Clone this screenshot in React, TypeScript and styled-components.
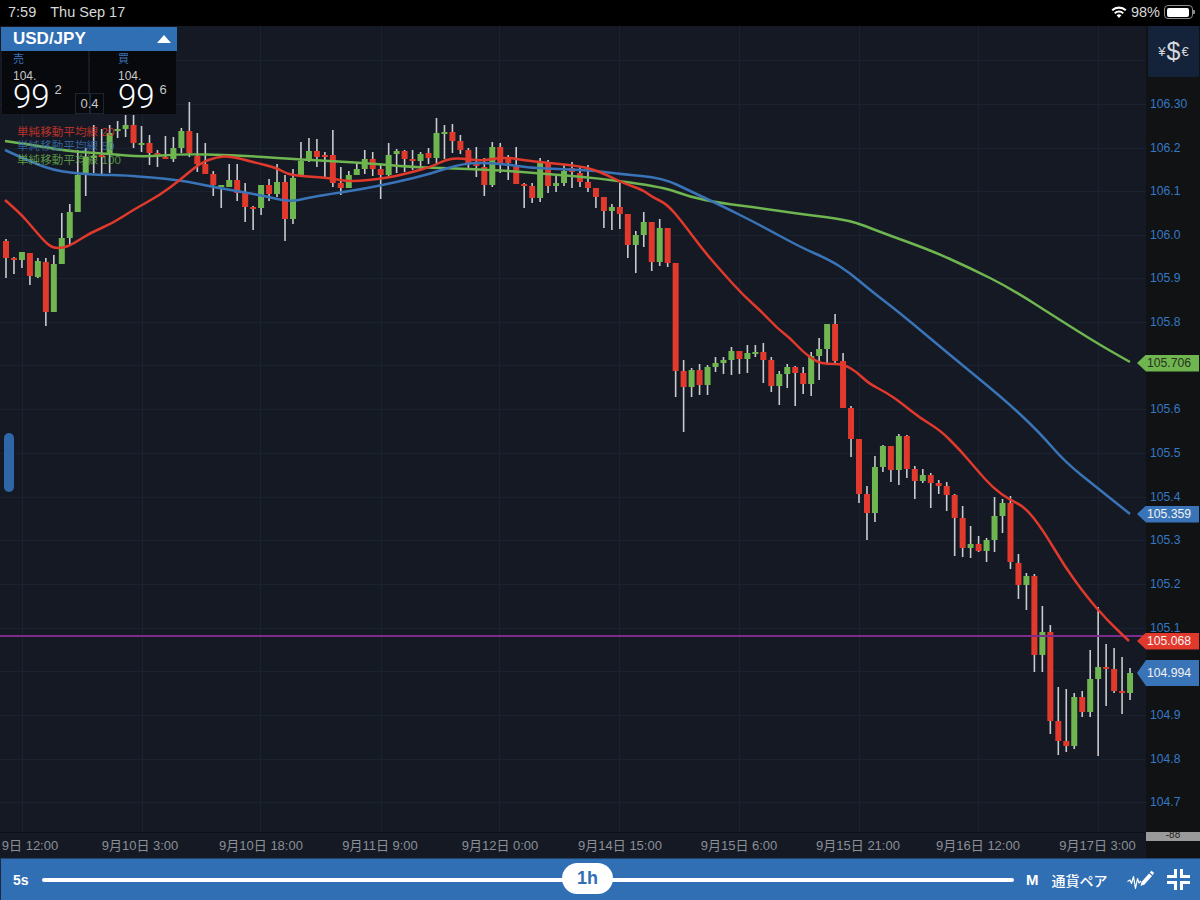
import React from 'react';
import styled, { createGlobalStyle } from 'styled-components';

const RED = '#e2392d';
const GREEN = '#6fb550';
const BLUE = '#3a74b8';
const BAR = '#316fb4';
const AXIS_W = 54;

// [up?, wickTop, bodyTop, bodyBottom, wickBottom]
type Candle = [0 | 1, number, number, number, number];

const candles: Candle[] = [
  [0, 239, 241, 258, 278], [0, 257, 258, 260, 274], [1, 252, 252, 260, 268], [0, 253, 253, 276, 285],
  [1, 258, 261, 277, 278], [0, 258, 262, 312, 326], [1, 255, 264, 312, 312], [1, 213, 238, 264, 264],
  [1, 204, 212, 238, 246], [1, 150, 175, 212, 212], [1, 148, 157, 173, 196], [1, 125, 156, 158, 173],
  [0, 129, 155, 157, 174], [1, 125, 133, 154, 173], [1, 121, 129, 131, 138], [1, 115, 125, 129, 137],
  [0, 115, 125, 143, 148], [1, 126, 143, 144, 152], [0, 135, 143, 153, 165], [0, 150, 153, 155, 167],
  [0, 136, 157, 159, 159], [1, 137, 148, 159, 162], [1, 128, 131, 148, 153], [0, 102, 131, 153, 157],
  [0, 133, 156, 164, 172], [0, 143, 164, 174, 174], [0, 171, 174, 185, 196], [1, 185, 185, 187, 208],
  [1, 164, 180, 187, 187], [0, 164, 180, 193, 201], [0, 183, 193, 207, 222], [0, 206, 207, 209, 230],
  [1, 185, 185, 208, 215], [0, 179, 185, 194, 201], [1, 164, 182, 194, 197], [0, 175, 182, 219, 241],
  [1, 169, 178, 219, 224], [1, 142, 161, 175, 175], [1, 138, 151, 160, 162], [0, 139, 151, 157, 167],
  [0, 152, 155, 157, 177], [0, 130, 155, 183, 187], [0, 167, 183, 188, 195], [1, 171, 175, 188, 188],
  [1, 163, 169, 175, 175], [1, 150, 159, 169, 174], [0, 152, 159, 169, 176], [0, 165, 169, 175, 199],
  [1, 143, 155, 175, 177], [1, 149, 151, 154, 173], [0, 150, 151, 159, 172], [0, 150, 159, 161, 170],
  [1, 152, 154, 161, 170], [0, 148, 153, 158, 164], [1, 118, 133, 158, 164], [1, 125, 132, 134, 159],
  [0, 124, 132, 141, 153], [0, 135, 141, 150, 154], [0, 148, 150, 163, 168], [0, 147, 164, 166, 177],
  [0, 158, 167, 185, 196], [1, 142, 147, 185, 187], [0, 143, 147, 163, 173], [0, 155, 157, 163, 180],
  [0, 147, 167, 184, 184], [0, 183, 184, 186, 208], [0, 183, 186, 198, 203], [1, 158, 162, 198, 202],
  [0, 160, 162, 186, 193], [1, 175, 183, 186, 192], [1, 165, 171, 183, 186], [0, 162, 168, 172, 188],
  [0, 167, 173, 182, 187], [0, 165, 182, 188, 192], [0, 188, 188, 197, 208], [0, 197, 197, 211, 228],
  [1, 204, 207, 211, 230], [0, 183, 207, 214, 229], [0, 214, 214, 245, 258], [1, 231, 235, 245, 273],
  [1, 212, 222, 235, 247], [0, 222, 222, 262, 271], [1, 219, 228, 262, 266], [0, 228, 228, 263, 267],
  [0, 263, 263, 371, 397], [0, 360, 371, 387, 432], [1, 368, 370, 387, 397], [0, 364, 370, 385, 395],
  [1, 365, 367, 385, 395], [1, 357, 363, 367, 372], [1, 357, 360, 363, 374], [1, 347, 351, 360, 375],
  [0, 351, 351, 359, 374], [1, 345, 353, 359, 373], [1, 345, 352, 354, 357], [0, 343, 352, 360, 383],
  [0, 357, 360, 386, 392], [1, 371, 374, 386, 405], [1, 364, 367, 374, 388], [0, 366, 367, 373, 406],
  [0, 367, 373, 384, 394], [1, 352, 356, 384, 396], [1, 338, 349, 356, 380], [1, 324, 324, 349, 363],
  [0, 314, 324, 361, 363], [0, 353, 361, 408, 408], [0, 406, 408, 439, 457], [0, 439, 439, 494, 503],
  [0, 486, 494, 513, 540], [1, 456, 467, 513, 522], [1, 445, 446, 467, 472], [0, 446, 446, 470, 482],
  [1, 434, 436, 470, 485], [0, 435, 436, 469, 478], [0, 466, 469, 481, 499], [1, 469, 475, 481, 483],
  [0, 473, 475, 483, 508], [0, 480, 483, 486, 494], [0, 482, 486, 495, 511], [0, 494, 495, 518, 556],
  [0, 506, 518, 548, 557], [1, 526, 544, 548, 558], [0, 536, 544, 551, 552], [1, 538, 540, 551, 562],
  [1, 497, 516, 540, 552], [1, 499, 503, 516, 533], [0, 496, 503, 562, 569], [0, 554, 563, 585, 599],
  [1, 573, 576, 585, 610], [0, 574, 576, 655, 672], [1, 606, 632, 655, 672], [0, 625, 632, 721, 734],
  [0, 687, 721, 741, 755], [0, 689, 741, 746, 752], [1, 693, 697, 746, 749], [0, 691, 697, 712, 717],
  [1, 650, 679, 712, 717], [1, 607, 667, 679, 756], [0, 644, 667, 669, 706], [0, 648, 669, 691, 693],
  [0, 657, 691, 693, 714], [1, 668, 673, 693, 700],
];

const ma20 = [
  [5, 200], [20, 213], [33, 228], [45, 242], [53, 248], [63, 248], [73, 244], [90, 233], [113, 223], [133, 210],
  [160, 195], [180, 180], [200, 163], [217, 157], [230, 156], [253, 162], [277, 168], [287, 174], [300, 176],
  [330, 178], [350, 182], [387, 178], [413, 172], [433, 166], [445, 160], [457, 158], [483, 161], [503, 157],
  [530, 161], [550, 163], [587, 167], [607, 175], [623, 183], [643, 190], [652, 197], [667, 204], [683, 223],
  [703, 250], [723, 273], [743, 295], [763, 313], [777, 328], [790, 338], [803, 352], [817, 362], [827, 364],
  [843, 364], [857, 372], [868, 383], [887, 393], [900, 402], [920, 418], [940, 430], [960, 450], [977, 470],
  [993, 488], [1010, 500], [1025, 507], [1043, 530], [1065, 567], [1087, 597], [1107, 620], [1129, 641],
];
const ma50 = [
  [5, 150], [33, 163], [60, 172], [100, 175], [123, 175], [180, 180], [213, 187], [260, 195], [290, 202],
  [307, 198], [330, 194], [363, 189], [397, 182], [430, 174], [463, 163], [497, 163], [530, 168], [563, 169],
  [597, 171], [620, 174], [663, 178], [690, 191], [720, 205], [760, 225], [800, 247], [830, 260], [850, 273],
  [870, 290], [900, 313], [950, 355], [1005, 400], [1040, 433], [1065, 462], [1100, 490], [1130, 514],
];
const ma100 = [
  [5, 141], [33, 145], [67, 151], [110, 154], [143, 157], [180, 154], [233, 155], [293, 159], [330, 161],
  [363, 163], [413, 167], [440, 168], [497, 170], [547, 174], [597, 178], [663, 187], [690, 197], [720, 203],
  [760, 208], [800, 214], [850, 220], [880, 232], [930, 250], [970, 268], [1010, 288], [1060, 320], [1100, 345],
  [1130, 362],
];

// rounded polyline through the midpoints
const toPath = (pts: number[][]) => {
  let d = `M${pts[0][0]} ${pts[0][1]}`;
  for (let i = 1; i < pts.length - 1; i++) {
    const mx = (pts[i][0] + pts[i + 1][0]) / 2;
    const my = (pts[i][1] + pts[i + 1][1]) / 2;
    d += ` Q${pts[i][0]} ${pts[i][1]} ${mx} ${my}`;
  }
  const last = pts[pts.length - 1];
  return `${d} L${last[0]} ${last[1]}`;
};

const gridY = [60, 104, 148, 191, 235, 278, 322, 365, 409, 453, 497, 540, 584, 628, 671, 715, 759, 802];
const gridX = [22, 142, 260, 381, 499, 619, 739, 859, 978, 1098];

const ticks = [
  ['106.30', 104], ['106.2', 148], ['106.1', 191], ['106.0', 235], ['105.9', 278], ['105.8', 322],
  ['105.6', 409], ['105.5', 453], ['105.4', 497], ['105.3', 540], ['105.2', 584], ['105.1', 628],
  ['104.9', 715], ['104.8', 759], ['104.7', 802],
] as const;

const flags = [
  { label: '105.706', y: 363, color: GREEN, ink: '#26331c' },
  { label: '105.359', y: 514, color: BLUE, ink: '#f2f2f2' },
  { label: '105.068', y: 641, color: RED, ink: '#f2f2f2' },
  { label: '104.994', y: 673, color: BLUE, ink: '#f2f2f2', tall: true },
];

const times = [
  ['9日 12:00', 30], ['9月10日 3:00', 140], ['9月10日 18:00', 261], ['9月11日 9:00', 380], ['9月12日 0:00', 500],
  ['9月14日 15:00', 620], ['9月15日 6:00', 739], ['9月15日 21:00', 858], ['9月16日 12:00', 978], ['9月17日 3:00', 1097.5],
] as const;

const Global = createGlobalStyle`
  html, body { margin: 0; background: #000; }
  body { font-family: "Liberation Sans", "Noto Sans CJK JP", sans-serif; }
  * { box-sizing: border-box; }
`;

const Screen = styled.div`
  width: 1200px;
  height: 900px;
  display: flex;
  flex-direction: column;
  overflow: hidden;
`;

const StatusBar = styled.div`
  height: 26px;
  flex: none;
  background: #000;
  color: #d8d8d8;
  padding: 0 7px 2px 8px;
  display: flex;
  align-items: center;
  justify-content: space-between;
`;

const StatusLeft = styled.div`
  display: flex;
  gap: 14px;
  font-size: 14.5px;
`;

const StatusRight = styled.div`
  display: flex;
  align-items: center;
  gap: 4px;
  font-size: 14.5px;
`;

const Battery = styled.div`
  width: 29px;
  height: 14px;
  border: 1px solid #8a8a8a;
  border-radius: 4px;
  padding: 1.5px;
  position: relative;
  &::before {
    content: '';
    display: block;
    height: 100%;
    width: 95%;
    background: #fff;
    border-radius: 2px;
  }
  &::after {
    content: '';
    position: absolute;
    right: -3px;
    top: 4px;
    width: 2px;
    height: 4px;
    background: #8a8a8a;
    border-radius: 0 1px 1px 0;
  }
`;

const Main = styled.div`
  flex: 1;
  display: flex;
  position: relative;
  min-height: 0;
`;

const ChartColumn = styled.div`
  flex: 1;
  display: flex;
  flex-direction: column;
  background: #141923;
  position: relative;
  min-width: 0;
`;

const Plot = styled.svg`
  display: block;
  flex: none;
  width: 100%;
  height: 806px;
`;

const TimeAxis = styled.div`
  flex: 1;
  position: relative;
  color: #8b8f96;
  font-size: 13px;
  border-top: 1px solid #0c0f15;
`;

const TimeLabel = styled.span`
  position: absolute;
  top: 2px;
  transform: translateX(-50%);
  white-space: nowrap;
`;

const PriceAxis = styled.div`
  width: ${AXIS_W}px;
  flex: none;
  background: #111214;
  position: relative;
`;

const CurrencyButton = styled.div`
  height: 51px;
  margin: 0 1px 0 2px;
  background: #14233a;
  color: #d5d8dc;
  display: flex;
  align-items: center;
  justify-content: center;
  font-size: 13px;
  gap: 1px;
  b {
    font-size: 25px;
    font-weight: 400;
  }
`;

const Tick = styled.span`
  position: absolute;
  left: 4px;
  color: #3479c4;
  font-size: 12.2px;
  transform: translateY(-50%);
`;

const Flag = styled.div<{ $color: string; $ink: string; $tall?: boolean }>`
  position: absolute;
  right: 1px;
  width: 62px;
  height: ${(p) => (p.$tall ? 26 : 17)}px;
  margin-top: ${(p) => (p.$tall ? -13 : -8.5)}px;
  background: ${(p) => p.$color};
  color: ${(p) => p.$ink};
  font-size: 12.2px;
  padding-left: 10px;
  display: flex;
  align-items: center;
  clip-path: polygon(9px 0, 100% 0, 100% 100%, 9px 100%, 0 50%);
  z-index: 3;
`;

const MinBox = styled.div`
  position: absolute;
  left: 0;
  right: 0;
  top: 806px;
  height: 9px;
  background: #9a9a9a;
  color: #222;
  font-size: 10px;
  line-height: 6px;
  text-align: center;
  overflow: hidden;
`;

const PairPanel = styled.div`
  position: absolute;
  left: 1px;
  top: 1px;
  width: 176px;
  z-index: 2;
`;

const PairHeader = styled.div`
  height: 24px;
  background: ${BAR};
  color: #fff;
  font-size: 17px;
  font-weight: 700;
  padding: 0 6px 0 12px;
  display: flex;
  align-items: center;
  justify-content: space-between;
`;

const UpArrow = styled.div`
  width: 0;
  height: 0;
  border-left: 7px solid transparent;
  border-right: 7px solid transparent;
  border-bottom: 8px solid #fff;
`;

const Quotes = styled.div`
  display: flex;
  gap: 2px;
  padding-left: 1px;
  position: relative;
`;

const Quote = styled.div<{ $inset: number }>`
  width: 86px;
  height: 63px;
  background: #07090d;
  padding: 2px 0 0 ${(p) => p.$inset}px;
  color: #c8c8c8;
`;

const QuoteSide = styled.div`
  color: ${BLUE};
  font-size: 11px;
  line-height: 13px;
`;

const QuoteBig = styled.div`
  font-size: 12px;
  line-height: 14px;
  margin-top: 3px;
`;

const QuoteDigits = styled.div`
  color: #fff;
  font-family: Roboto, "Liberation Sans", sans-serif;
  font-weight: 300;
  font-size: 33px;
  line-height: 27px;
  display: flex;
  align-items: flex-start;
  gap: 5px;
  sup {
    font-family: "Liberation Sans", sans-serif;
    font-size: 13px;
    font-weight: 400;
    line-height: 14px;
    color: #c8c8c8;
    margin-top: 0;
  }
`;

const Spread = styled.div`
  position: absolute;
  left: 74px;
  bottom: 0;
  width: 29px;
  height: 21px;
  background: linear-gradient(90deg, #07090d 13px, #1a2535 13px, #1a2535 15px, #07090d 15px);
  border: 1px solid #1a2535;
  color: #c8c8c8;
  font-size: 13px;
  display: flex;
  align-items: center;
  justify-content: center;
`;

const Legend = styled.div`
  position: absolute;
  left: 17px;
  top: 99px;
  font-size: 11.5px;
  line-height: 14px;
  letter-spacing: 0.1px;
  z-index: 1;
`;

const LegendRow = styled.div<{ $color: string }>`
  color: ${(p) => p.$color};
  opacity: 0.78;
`;

const SideHandle = styled.div`
  position: absolute;
  left: 4px;
  top: 407px;
  width: 10px;
  height: 59px;
  background: #2e66a8;
  border-radius: 5px;
  z-index: 1;
`;

const BottomBar = styled.div`
  height: 42px;
  flex: none;
  background: ${BAR};
  border-top: 1px solid #20466f;
  border-left: 1px solid #1b2a3f;
  color: #fff;
  display: flex;
  align-items: center;
  padding-left: 12px;
`;

const SpeedLabel = styled.span`
  font-size: 14px;
  font-weight: 700;
  width: 16px;
`;

const MonthLabel = styled.span`
  font-size: 15px;
  font-weight: 700;
`;

const Slider = styled.div`
  width: 972px;
  height: 4px;
  margin: 0 12px 0 13px;
  background: #fff;
  border-radius: 2px;
  position: relative;
`;

const Thumb = styled.div`
  position: absolute;
  left: 520px;
  top: -15px;
  width: 51px;
  height: 31px;
  background: #fff;
  border-radius: 15.5px;
  color: ${BAR};
  font-size: 18px;
  font-weight: 700;
  display: flex;
  align-items: center;
  justify-content: center;
`;

const PairButton = styled.span`
  font-size: 14px;
  font-weight: 500;
  margin-left: 13px;
  white-space: nowrap;
`;

const ToolIcons = styled.div`
  display: flex;
  align-items: center;
  gap: 13px;
  margin-left: 19px;
`;

function DrawIcon() {
  return (
    <svg width="27" height="21" viewBox="0 0 27 21" fill="none">
      <path
        d="M0.5 12.5 L3 11 L4.5 14.5 L6.5 7.5 L8.5 19.5 L10.5 9.5 L12 14 L14 12"
        stroke="#fff"
        strokeWidth="1.2"
        strokeLinejoin="round"
      />
      <path d="M14.5 13 L22 4.5 L25 7 L17.5 15.5 L13.5 17 Z" fill="#fff" />
      <path d="M22.8 3.6 L24.5 1.8 L27 3.8 L25.8 6.2 Z" fill="#fff" />
    </svg>
  );
}

function ShrinkIcon() {
  return (
    <svg width="23" height="21" viewBox="0 0 23 21" fill="none" stroke="#fff" strokeWidth="3">
      <path d="M8.5 0 V7.5 H0" />
      <path d="M14.5 0 V7.5 H23" />
      <path d="M8.5 21 V13.5 H0" />
      <path d="M14.5 21 V13.5 H23" />
    </svg>
  );
}

function WifiIcon() {
  return (
    <svg width="16" height="12" viewBox="0 0 16 12" fill="#fff">
      <path d="M8 12 L5.6 9.2 A3.6 3.6 0 0 1 10.4 9.2 Z" />
      <path d="M4.4 7.9 L3.1 6.4 A7.2 7.2 0 0 1 12.9 6.4 L11.6 7.9 A5.3 5.3 0 0 0 4.4 7.9 Z" />
      <path d="M1.9 5.1 L0.5 3.5 A11 11 0 0 1 15.5 3.5 L14.1 5.1 A9 9 0 0 0 1.9 5.1 Z" />
    </svg>
  );
}

function Chart() {
  return (
    <Plot viewBox="0 26 1146 806" preserveAspectRatio="none">
      {gridY.map((y) => (
        <line key={y} x1="0" x2="1146" y1={y + 0.5} y2={y + 0.5} stroke="#182231" strokeWidth="1" />
      ))}
      {gridX.map((x) => (
        <line key={x} x1={x + 0.5} x2={x + 0.5} y1="26" y2="832" stroke="#182231" strokeWidth="1" />
      ))}
      {candles.map(([up, wt, bt, bb, wb], i) => {
        const x = 6 + i * 7.972;
        const fill = up ? GREEN : RED;
        return (
          <g key={i}>
            <rect x={x - 0.8} y={wt} width="1.6" height={wb - wt} fill="#c8cacd" />
            <rect x={x - 3} y={bt} width="6" height={Math.max(bb - bt, 2)} fill={fill} />
          </g>
        );
      })}
      <line x1="0" x2="1146" y1="636" y2="636" stroke="#7b2c8c" strokeWidth="2" />
      <path d={toPath(ma100)} fill="none" stroke={GREEN} strokeWidth="2.5" strokeLinejoin="round" />
      <path d={toPath(ma50)} fill="none" stroke={BLUE} strokeWidth="2.5" strokeLinejoin="round" />
      <path d={toPath(ma20)} fill="none" stroke={RED} strokeWidth="2.5" strokeLinejoin="round" />
    </Plot>
  );
}

export default function App() {
  return (
    <Screen>
      <Global />
      <StatusBar>
        <StatusLeft>
          <span>7:59</span>
          <span>Thu Sep 17</span>
        </StatusLeft>
        <StatusRight>
          <WifiIcon />
          <span>98%</span>
          <Battery />
        </StatusRight>
      </StatusBar>
      <Main>
        <ChartColumn>
          <Chart />
          <TimeAxis>
            {times.map(([t, x]) => (
              <TimeLabel key={t} style={{ left: x }}>
                {t}
              </TimeLabel>
            ))}
          </TimeAxis>
          <PairPanel>
            <PairHeader>
              USD/JPY
              <UpArrow />
            </PairHeader>
            <Quotes>
              <Quote $inset={11}>
                <QuoteSide>売</QuoteSide>
                <QuoteBig>104.</QuoteBig>
                <QuoteDigits>
                  99<sup>2</sup>
                </QuoteDigits>
              </Quote>
              <Quote $inset={28}>
                <QuoteSide>買</QuoteSide>
                <QuoteBig>104.</QuoteBig>
                <QuoteDigits>
                  99<sup>6</sup>
                </QuoteDigits>
              </Quote>
              <Spread>0.4</Spread>
            </Quotes>
          </PairPanel>
          <Legend>
            <LegendRow $color={RED}>単純移動平均線 20</LegendRow>
            <LegendRow $color={BLUE}>単純移動平均線 50</LegendRow>
            <LegendRow $color={GREEN}>単純移動平均線 100</LegendRow>
          </Legend>
          <SideHandle />
        </ChartColumn>
        <PriceAxis>
          <CurrencyButton>
            ¥<b>$</b>€
          </CurrencyButton>
          {ticks.map(([t, y]) => (
            <Tick key={t} style={{ top: y - 26 }}>
              {t}
            </Tick>
          ))}
          <MinBox>-88</MinBox>
          {flags.map((f) => (
            <Flag key={f.label} $color={f.color} $ink={f.ink} $tall={f.tall} style={{ top: f.y - 26 }}>
              {f.label}
            </Flag>
          ))}
        </PriceAxis>
      </Main>
      <BottomBar>
        <SpeedLabel>5s</SpeedLabel>
        <Slider>
          <Thumb>1h</Thumb>
        </Slider>
        <MonthLabel>M</MonthLabel>
        <PairButton>通貨ペア</PairButton>
        <ToolIcons>
          <DrawIcon />
          <ShrinkIcon />
        </ToolIcons>
      </BottomBar>
    </Screen>
  );
}
